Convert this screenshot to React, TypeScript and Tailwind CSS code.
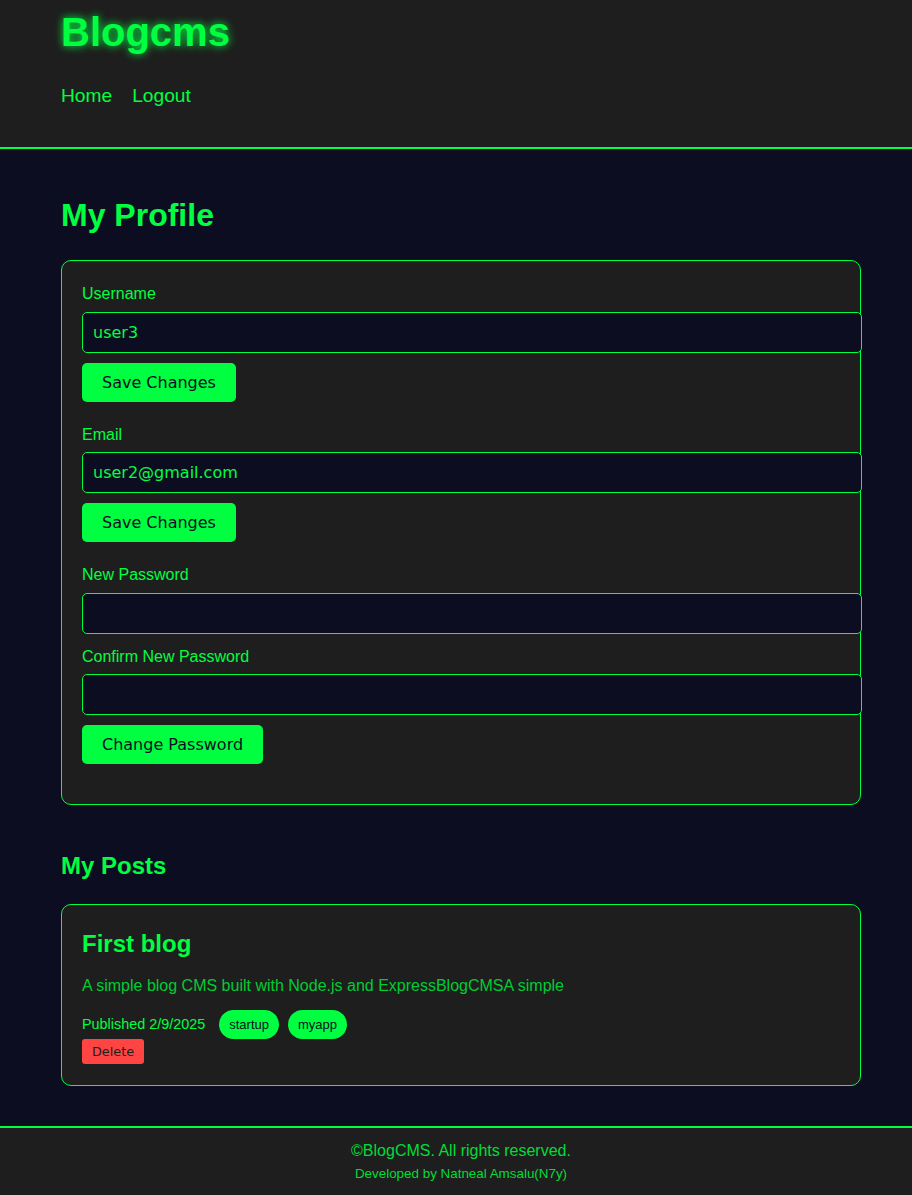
import React from 'react';

interface FieldProps {
  label: string;
  value?: string;
  type?: string;
  className?: string;
}

const Field: React.FC<FieldProps> = ({ label, value = '', type = 'text', className = '' }) => (
  <div className={className}>
    <label className="block leading-[1.6] text-[16px] text-[#00ff41] mb-[5px]">{label}</label>
    <input
      type={type}
      defaultValue={value}
      className="box-content block w-full h-[19px] px-[10px] py-[10px] bg-[#0d0d21] border border-[#00ff41] rounded-[5px] text-[16px] leading-[19px] text-[#00ff41] font-['DejaVu_Sans',sans-serif] outline-none"
    />
  </div>
);

const GreenButton: React.FC<{ children: React.ReactNode }> = ({ children }) => (
  <button className="mt-[10px] px-[20px] py-[10px] bg-[#00ff41] text-[#0d0d21] rounded-[5px] text-[16px] leading-[19px] font-['DejaVu_Sans',sans-serif]">
    {children}
  </button>
);

const App: React.FC = () => {
  return (
    <div className="min-h-[1195px] flex flex-col bg-[#0d0d21] font-['Liberation_Sans',Arial,sans-serif] text-[#00ff41]">
      <header className="bg-[#1e1e1e] border-b-2 border-[#00ff41] h-[149px]">
        <div className="ml-[61px] w-[800px] pt-[10px]">
          <h1 className="text-[40px] leading-[45px] font-bold text-[#00ff41] [text-shadow:0_0_8px_#00ff41]">Blogcms</h1>
          <nav className="mt-[30px] flex gap-[20px] text-[19.2px] leading-[21.4px]">
            <a href="#" className="text-[#00ff41]">Home</a>
            <a href="#" className="text-[#00ff41]">Logout</a>
          </nav>
        </div>
      </header>

      <main className="flex-1 ml-[61px] w-[800px] pt-[48px] pb-[34px]">
        <h2 className="text-[32px] leading-[36px] font-bold mb-[27px]">My Profile</h2>

        <div className="bg-[#1e1e1e] border border-[#00ff41] rounded-[10px] p-[20px]">
          <form className="mb-[20px]" onSubmit={(e) => e.preventDefault()}>
            <Field label="Username" value="user3" />
            <GreenButton>Save Changes</GreenButton>
          </form>
          <form className="mb-[20px]" onSubmit={(e) => e.preventDefault()}>
            <Field label="Email" value="user2@gmail.com" />
            <GreenButton>Save Changes</GreenButton>
          </form>
          <form className="mb-[20px]" onSubmit={(e) => e.preventDefault()}>
            <Field label="New Password" type="password" className="mb-[10px]" />
            <Field label="Confirm New Password" type="password" />
            <GreenButton>Change Password</GreenButton>
          </form>
        </div>

        <h3 className="mt-[47px] text-[24px] leading-[27.6px] font-bold mb-[24px]">My Posts</h3>

        <div className="bg-[#1e1e1e] border border-[#00ff41] rounded-[10px] px-[20px] pt-[20px] pb-[21px]">
          <h4 className="text-[24px] leading-[1.6] font-bold mb-[10px]">First blog</h4>
          <p className="text-[16px] leading-[1.6] text-[#00cc33]">
            A simple blog CMS built with Node.js and ExpressBlogCMSA simple
          </p>
          <div className="mt-[11px] flex items-center">
            <span className="text-[14.4px] leading-[1.6]">Published 2/9/2025</span>
            <span className="ml-[14px] h-[29px] flex items-center px-[10px] rounded-full bg-[#00ff41] text-[#0d0d21] text-[13px]">startup</span>
            <span className="ml-[9px] h-[29px] flex items-center px-[10px] rounded-full bg-[#00ff41] text-[#0d0d21] text-[13px]">myapp</span>
          </div>
          <button className="block px-[10px] py-[5px] bg-[#ff4444] text-[#1e1e1e] rounded-[3px] text-[12.8px] leading-[15px] font-['DejaVu_Sans',sans-serif]">
            Delete
          </button>
        </div>
      </main>

      <footer className="bg-[#1e1e1e] border-t-2 border-[#00ff41] pt-[10px] pb-[12px]">
        <div className="ml-[61px] w-[800px] text-center">
          <p className="text-[16px] leading-[1.6] text-[#00dd38]">©BlogCMS. All rights reserved.</p>
          <p className="text-[13.4px] leading-[1.45] text-[#00dd38]">Developed by Natneal Amsalu(N7y)</p>
        </div>
      </footer>
    </div>
  );
};

export default App;
